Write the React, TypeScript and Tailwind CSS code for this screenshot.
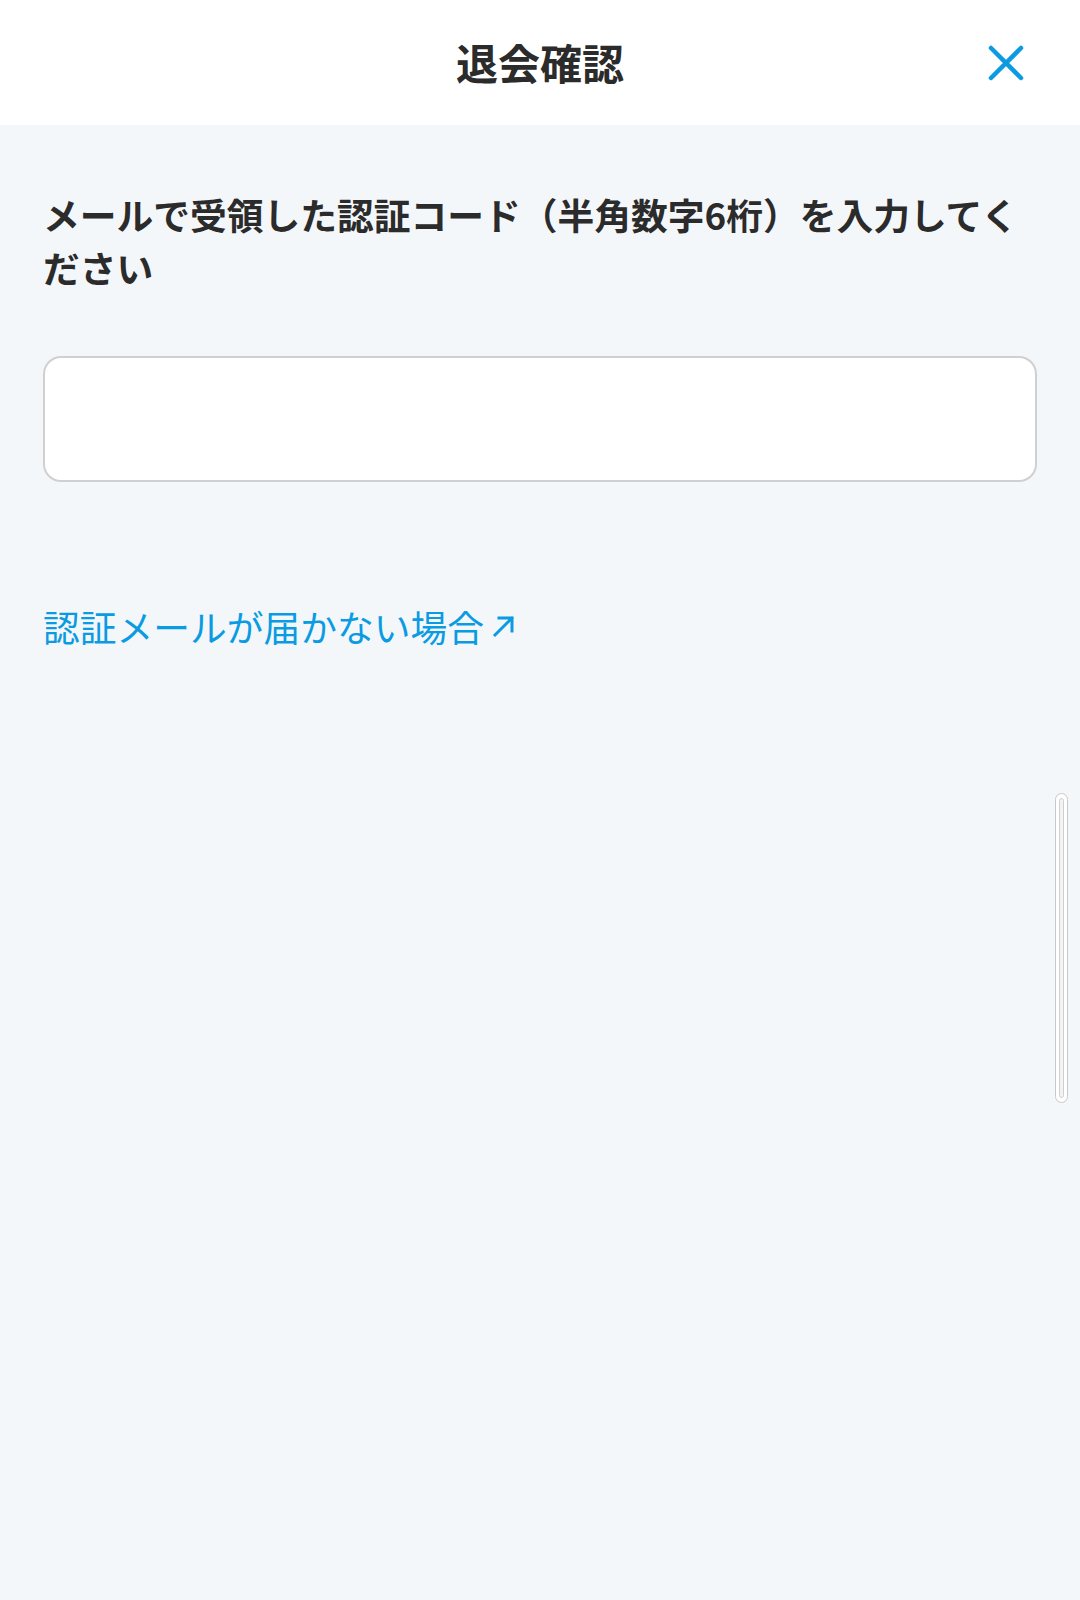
import { useState } from "react";

const jpFont = {
  fontFamily: '"Noto Sans CJK JP", "Noto Sans", sans-serif',
};

function CloseIcon() {
  return (
    <svg width="36" height="36" viewBox="0 0 36 36" fill="none">
      <path
        d="M3 3L33 33M33 3L3 33"
        stroke="#0a9be2"
        strokeWidth="4.5"
        strokeLinecap="round"
      />
    </svg>
  );
}

function ArrowIcon() {
  return (
    <svg width="24" height="24" viewBox="0 0 24 24" fill="none">
      <path
        d="M3 21L20 4M7 4H20V17"
        stroke="#0a9be2"
        strokeWidth="3"
        strokeLinecap="square"
      />
    </svg>
  );
}

export default function App() {
  const [code, setCode] = useState("");

  return (
    <div
      className="relative min-h-[1600px] w-full bg-[#f4f7fa] text-[#2b2b2b]"
      style={jpFont}
    >
      <header className="relative flex h-[125px] items-center justify-center bg-white pb-[2px]">
        <h1 className="text-[42px] font-bold leading-none">退会確認</h1>
        <button className="absolute right-[56px] top-[45px] flex items-center justify-center">
          <CloseIcon />
        </button>
      </header>

      <main className="px-[43px] pt-[63px]">
        <p className="text-[36.75px] font-bold leading-[52.5px]">
          メールで受領した認証コード（半角数字6桁）を入力してください
        </p>

        <input
          type="text"
          inputMode="numeric"
          value={code}
          onChange={(e) => setCode(e.target.value)}
          className="mt-[63px] block h-[126px] w-full rounded-[18px] border-2 border-[#d0d0d0] bg-white px-[40px] text-[40px] outline-none"
        />

        <a
          href="#"
          className="mt-[118px] flex items-center gap-[8px] text-[36.75px] leading-[52.5px] text-[#0a9be2]"
        >
          認証メールが届かない場合
          <ArrowIcon />
        </a>
      </main>

      {/* scroll indicator */}
      <div className="absolute left-[1055px] top-[793px] flex h-[310px] w-[13px] justify-center rounded-full border border-[#c9c9c9] bg-white py-[4px]">
        <div className="h-full w-[5px] rounded-full border border-[#cfcfcf] bg-[#f3f3f3]" />
      </div>
    </div>
  );
}
